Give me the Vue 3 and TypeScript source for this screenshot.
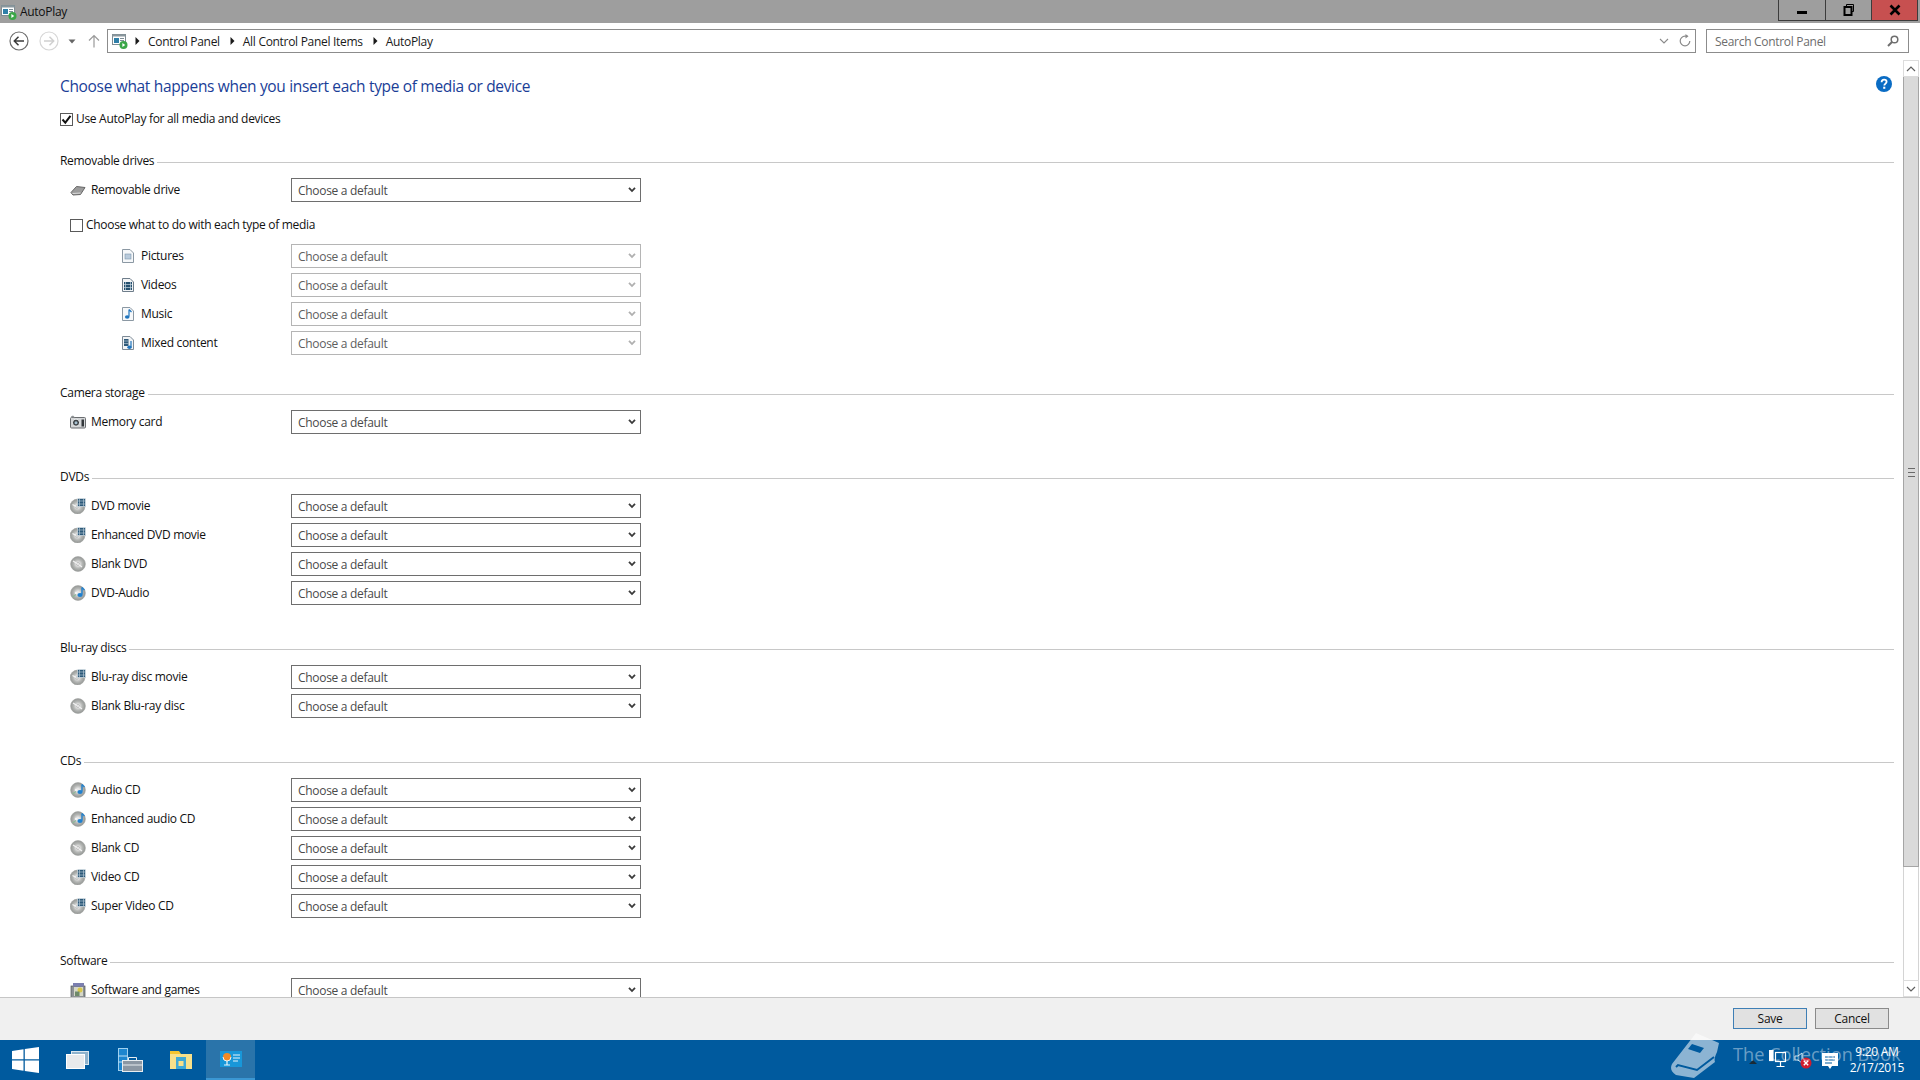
<script setup lang="ts">
interface Row { label: string; icon: string }
interface Section { title: string; rows: Row[] }

const media: Row[] = [
  { label: 'Pictures', icon: 'doc-pic' },
  { label: 'Videos', icon: 'doc-vid' },
  { label: 'Music', icon: 'doc-music' },
  { label: 'Mixed content', icon: 'doc-mixed' },
]

const sections: Section[] = [
  { title: 'Camera storage', rows: [{ label: 'Memory card', icon: 'camera' }] },
  {
    title: 'DVDs',
    rows: [
      { label: 'DVD movie', icon: 'disc-video' },
      { label: 'Enhanced DVD movie', icon: 'disc-video' },
      { label: 'Blank DVD', icon: 'disc' },
      { label: 'DVD-Audio', icon: 'disc-music' },
    ],
  },
  {
    title: 'Blu-ray discs',
    rows: [
      { label: 'Blu-ray disc movie', icon: 'disc-video' },
      { label: 'Blank Blu-ray disc', icon: 'disc' },
    ],
  },
  {
    title: 'CDs',
    rows: [
      { label: 'Audio CD', icon: 'disc-music' },
      { label: 'Enhanced audio CD', icon: 'disc-music' },
      { label: 'Blank CD', icon: 'disc' },
      { label: 'Video CD', icon: 'disc-video' },
      { label: 'Super Video CD', icon: 'disc-video' },
    ],
  },
  { title: 'Software', rows: [{ label: 'Software and games', icon: 'software' }] },
]
</script>

<template>
  <div class="screen">
    <svg class="defs" width="0" height="0" aria-hidden="true">
      <defs>
        <radialGradient id="discFill" cx="50%" cy="50%" r="50%">
          <stop offset="0.2" stop-color="#e8e8e8" />
          <stop offset="0.6" stop-color="#b4b6b4" />
          <stop offset="1" stop-color="#949795" />
        </radialGradient>
      </defs>
      <symbol id="app-ic" viewBox="0 0 16 16">
        <rect x="0.5" y="1.5" width="13" height="10" fill="#fff" stroke="#7f8c93" />
        <rect x="0.5" y="1.5" width="13" height="2" fill="#8a979e" />
        <rect x="2" y="5" width="5" height="5" fill="#2f7fa8" />
        <rect x="8" y="5" width="4" height="1" fill="#7d8d96" />
        <rect x="8" y="7" width="4" height="1" fill="#7d8d96" />
        <circle cx="11.5" cy="12" r="4" fill="#3aa648" />
        <path d="M10.4 10.1 13.2 12 10.4 13.9Z" fill="#fff" />
      </symbol>
      <symbol id="chev" viewBox="0 0 5 8"><path d="M0.5 0 4.5 4 0.5 8Z" fill="#1a1a1a" /></symbol>
      <symbol id="drive" viewBox="0 0 16 16">
        <path d="M1 10.5 6.5 4.5 15 5.5 10.5 12.5 3 13Z" fill="#9c9c9c" stroke="#666" />
        <path d="M2.5 11.5 10.5 11" stroke="#dcdcdc" />
      </symbol>
      <symbol id="doc-pic" viewBox="0 0 16 16">
        <path d="M2.5 1.5H10L13.5 5V14.5H2.5Z" fill="#f6f8fa" stroke="#8b98a3" />
        <rect x="5" y="6" width="6" height="5" fill="#b9cbdc" stroke="#7c96ad" stroke-width=".6" />
      </symbol>
      <symbol id="doc-vid" viewBox="0 0 16 16">
        <path d="M2.5 1.5H10L13.5 5V14.5H2.5Z" fill="#f2f4f6" stroke="#6e7d8a" />
        <rect x="4" y="5" width="8" height="8" fill="#24506f" />
        <path d="M5.5 5V13M10.5 5V13M4 7.5H12M4 10.5H12" stroke="#c5d4df" stroke-width=".7" />
      </symbol>
      <symbol id="doc-music" viewBox="0 0 16 16">
        <path d="M2.5 1.5H10L13.5 5V14.5H2.5Z" fill="#f6f8fa" stroke="#8b98a3" />
        <path d="M9 3.5V10.5M9 3.5 11.5 6" stroke="#1f74bd" stroke-width="1.2" fill="none" />
        <ellipse cx="7.2" cy="11" rx="2.3" ry="1.8" fill="#1f74bd" />
      </symbol>
      <symbol id="doc-mixed" viewBox="0 0 16 16">
        <path d="M2.5 1.5H10L13.5 5V14.5H2.5Z" fill="#f2f4f6" stroke="#7d8a96" />
        <rect x="4" y="4" width="4.5" height="7" fill="#305a79" />
        <path d="M4 6H8.5M4 8.5H8.5" stroke="#c5d4df" stroke-width=".6" />
        <path d="M11 6V12" stroke="#1f74bd" stroke-width="1.2" />
        <ellipse cx="9.5" cy="12.2" rx="2.2" ry="1.7" fill="#1f74bd" />
      </symbol>
      <symbol id="camera" viewBox="0 0 16 16">
        <rect x="0.5" y="3.5" width="15" height="10.5" rx="1" fill="#d4d6d8" stroke="#6a6d70" />
        <path d="M1 2.5 3 1.5 5 3.5H1Z" fill="#8f9396" />
        <circle cx="6" cy="8.7" r="3.6" fill="#3e4347" stroke="#f2f4f5" />
        <circle cx="6" cy="8.7" r="1.5" fill="#a8c1d1" />
        <rect x="11.5" y="5.5" width="2.5" height="7" fill="#33373a" />
      </symbol>
      <symbol id="disc" viewBox="0 0 16 16">
        <circle cx="8" cy="8" r="7.4" fill="url(#discFill)" stroke="#a2a4a2" stroke-width=".6" />
        <circle cx="8" cy="8" r="1.5" fill="#f4f4f4" stroke="#8e8e8e" stroke-width=".5" />
        <path d="M3 5 7 7.5M12 11 9 8.7" stroke="#f3f3f3" stroke-width="1.2" />
      </symbol>
      <symbol id="disc-video" viewBox="0 0 16 16">
        <circle cx="7.5" cy="8.5" r="7.4" fill="url(#discFill)" stroke="#a2a4a2" stroke-width=".6" />
        <circle cx="7" cy="9" r="1.3" fill="#f4f4f4" stroke="#8e8e8e" stroke-width=".5" />
        <path d="M2.5 6.5 6 8.4" stroke="#f3f3f3" stroke-width="1.2" />
        <rect x="7.5" y="0.5" width="8" height="8" fill="#2d5a7a" stroke="#e9eef2" stroke-width=".6" />
        <path d="M9.5 1V8M13.5 1V8M8 3H15M8 6H15" stroke="#c5d4df" stroke-width=".6" />
      </symbol>
      <symbol id="disc-music" viewBox="0 0 16 16">
        <circle cx="8" cy="8" r="7.4" fill="url(#discFill)" stroke="#a2a4a2" stroke-width=".6" />
        <circle cx="6" cy="8" r="1.2" fill="#f4f4f4" />
        <path d="M2.5 12 6 9.6" stroke="#8fb89a" stroke-width="1.2" />
        <path d="M12 2.5V9.5" stroke="#1f80cf" stroke-width="1.4" />
        <path d="M12 2.5 14.5 5" stroke="#1f80cf" stroke-width="1.1" />
        <ellipse cx="10" cy="10" rx="2.6" ry="2" fill="#1f80cf" />
      </symbol>
      <symbol id="software" viewBox="0 0 16 16">
        <rect x="1" y="4" width="14" height="11.5" fill="#8d9295" stroke="#4f5356" stroke-width=".7" />
        <rect x="3" y="1" width="11" height="3.5" fill="#7b7fb0" />
        <rect x="4" y="5" width="9" height="9" fill="#d5d7c8" />
        <circle cx="10" cy="8" r="2.5" fill="#d9c84a" />
        <rect x="5" y="9.5" width="4.5" height="4.5" fill="#6f8a6a" />
      </symbol>
      <symbol id="combo-chev" viewBox="0 0 10 8">
        <path d="M2 1.8 5 5 8 1.8" fill="none" stroke="currentColor" stroke-width="1.8" />
      </symbol>
    </svg>

    <header class="titlebar">
      <svg class="title-icon"><use href="#app-ic" /></svg>
      <span class="title-text">AutoPlay</span>
      <div class="winbtns">
        <div class="winbtn">
          <svg width="12" height="12" viewBox="0 0 12 12"><rect x="1" y="7" width="10" height="3" fill="#000" /></svg>
        </div>
        <div class="winbtn">
          <svg width="12" height="12" viewBox="0 0 12 12" fill="none" stroke="#000">
            <path d="M3.5 2.5V0.5H10.5V7.5H9" />
            <rect x="1.5" y="3" width="7" height="8" stroke-width="2" />
          </svg>
        </div>
        <div class="winbtn close">
          <svg width="12" height="12" viewBox="0 0 12 12"><path d="M1.5 1.5 10.5 10.5M10.5 1.5 1.5 10.5" stroke="#000" stroke-width="2.6" /></svg>
        </div>
      </div>
    </header>

    <nav class="navbar">
      <div class="navbtns">
        <svg class="nav-round" viewBox="0 0 20 20">
          <circle cx="10" cy="10" r="9" fill="#fff" stroke="#6c6c6c" stroke-width="1.2" />
          <path d="M15 10H5.5M9.5 5.8 5.3 10 9.5 14.2" fill="none" stroke="#3a3a3a" stroke-width="1.5" />
        </svg>
        <svg class="nav-round" viewBox="0 0 20 20">
          <circle cx="10" cy="10" r="9" fill="#fff" stroke="#d6d6d6" stroke-width="1.2" />
          <path d="M5 10H14.5M10.5 5.8 14.7 10 10.5 14.2" fill="none" stroke="#d0d0d0" stroke-width="1.5" />
        </svg>
        <svg class="nav-drop" viewBox="0 0 8 5"><path d="M0.5 0.5H7.5L4 4.5Z" fill="#666" /></svg>
        <svg class="nav-up" viewBox="0 0 12 14"><path d="M6 13.5V1.5M1 6.5 6 1.5 11 6.5" fill="none" stroke="#9a9a9a" stroke-width="1.2" /></svg>
      </div>
      <div class="address">
        <svg class="addr-icon"><use href="#app-ic" /></svg>
        <svg class="crumb-chev"><use href="#chev" /></svg>
        <span class="crumb">Control Panel</span>
        <svg class="crumb-chev"><use href="#chev" /></svg>
        <span class="crumb">All Control Panel Items</span>
        <svg class="crumb-chev"><use href="#chev" /></svg>
        <span class="crumb">AutoPlay</span>
        <span class="spacer"></span>
        <svg class="addr-drop" viewBox="0 0 10 6"><path d="M1 1 5 5 9 1" fill="none" stroke="#8a8a8a" stroke-width="1.1" /></svg>
        <svg class="addr-refresh" viewBox="0 0 14 14">
          <path d="M11.8 7A4.8 4.8 0 1 1 7 2.2H9.5" fill="none" stroke="#8a8a8a" stroke-width="1.2" />
          <path d="M7.5 0 10.5 2.2 7.5 4.4Z" fill="#8a8a8a" />
        </svg>
      </div>
      <div class="search">
        <span class="search-text">Search Control Panel</span>
        <svg class="search-icon" viewBox="0 0 12 12">
          <circle cx="7.5" cy="4.5" r="3.3" fill="none" stroke="#6e6e6e" stroke-width="1.5" />
          <path d="M5 7 1 11" stroke="#6e6e6e" stroke-width="2" />
        </svg>
      </div>
    </nav>

    <main class="pane">
      <div class="content">
        <div class="heading-row">
          <h1 class="heading">Choose what happens when you insert each type of media or device</h1>
          <svg class="help" viewBox="0 0 16 16">
            <circle cx="8" cy="8" r="8" fill="#0a6cc4" />
            <path d="M5.6 6.2C5.6 4.6 6.7 3.6 8.1 3.6 9.6 3.6 10.6 4.5 10.6 5.8 10.6 7.6 8.3 7.6 8.3 9.6" fill="none" stroke="#fff" stroke-width="1.8" />
            <rect x="7.2" y="10.7" width="2.1" height="2.1" fill="#fff" />
          </svg>
        </div>

        <label class="check-row top">
          <span class="box">
            <svg viewBox="0 0 11 11"><path d="M1.5 5.5 4.3 8.6 9.5 1.8" fill="none" stroke="#111" stroke-width="2" /></svg>
          </span>
          <span class="check-text">Use AutoPlay for all media and devices</span>
        </label>

        <section class="section media">
          <div class="legend"><span class="legend-text">Removable drives</span><span class="legend-line"></span></div>
          <div class="row">
            <svg class="row-icon"><use href="#drive" /></svg>
            <span class="row-label">Removable drive</span>
            <div class="combo">
              <span class="combo-text">Choose a default</span>
              <svg class="combo-chev"><use href="#combo-chev" /></svg>
            </div>
          </div>
          <label class="check-row sub">
            <span class="box"></span>
            <span class="check-text">Choose what to do with each type of media</span>
          </label>
          <div class="rows indented">
            <div v-for="m in media" :key="m.label" class="row">
              <svg class="row-icon"><use :href="'#' + m.icon" /></svg>
              <span class="row-label">{{ m.label }}</span>
              <div class="combo off">
                <span class="combo-text">Choose a default</span>
                <svg class="combo-chev"><use href="#combo-chev" /></svg>
              </div>
            </div>
          </div>
        </section>

        <section v-for="s in sections" :key="s.title" class="section">
          <div class="legend"><span class="legend-text">{{ s.title }}</span><span class="legend-line"></span></div>
          <div class="rows">
            <div v-for="r in s.rows" :key="r.label" class="row">
              <svg class="row-icon"><use :href="'#' + r.icon" /></svg>
              <span class="row-label">{{ r.label }}</span>
              <div class="combo">
                <span class="combo-text">Choose a default</span>
                <svg class="combo-chev"><use href="#combo-chev" /></svg>
              </div>
            </div>
          </div>
        </section>
      </div>

      <aside class="scrollbar">
        <div class="sb-btn">
          <svg viewBox="0 0 10 6"><path d="M1 5 5 1 9 5" fill="none" stroke="#5f5f5f" stroke-width="1.2" /></svg>
        </div>
        <div class="sb-track">
          <div class="sb-thumb"><span class="grip"></span></div>
        </div>
        <div class="sb-btn">
          <svg viewBox="0 0 10 6"><path d="M1 1 5 5 9 1" fill="none" stroke="#5f5f5f" stroke-width="1.2" /></svg>
        </div>
      </aside>
    </main>

    <footer class="footer">
      <button class="btn primary">Save</button>
      <button class="btn">Cancel</button>
    </footer>

    <div class="taskbar">
      <div class="task-items">
        <div class="task start">
          <svg width="27" height="26" viewBox="0 0 27 26">
            <path d="M0 4 11.5 2.3V12.3H0ZM12.8 2.1 27 0V12.3H12.8ZM0 13.6H11.5V23.7L0 22ZM12.8 13.6H27V26L12.8 23.9Z" fill="#fff" />
          </svg>
        </div>
        <div class="task view">
          <svg width="23" height="18" viewBox="0 0 23 18">
            <rect x="5.5" y="0.5" width="17" height="13" fill="#8fb3cd" stroke="#dbe7ef" />
            <rect x="0.5" y="3.5" width="18" height="14" fill="#e8eaec" stroke="#fff" />
          </svg>
        </div>
        <div class="task server">
          <svg width="25" height="24" viewBox="0 0 25 24">
            <rect x="0.5" y="0.5" width="9" height="22" fill="#1d86cf" stroke="#9fd0ef" />
            <path d="M0.5 8H9.5M0.5 14H9.5" stroke="#bfe0f5" />
            <rect x="4.5" y="12.5" width="20" height="11" fill="#8b97a3" stroke="#e8edf0" />
            <path d="M10.5 12.5V9.5H18.5V12.5" fill="none" stroke="#e8edf0" />
            <path d="M4.5 17H24.5" stroke="#e8edf0" />
          </svg>
        </div>
        <div class="task">
          <svg width="23" height="20" viewBox="0 0 23 20">
            <path d="M0 1H9L11 4H22V19H0Z" fill="#f4c430" />
            <rect x="0" y="4" width="22" height="15" fill="#f8e08a" />
            <rect x="6" y="7" width="10" height="12" fill="#3fa9d6" />
            <rect x="8.5" y="11" width="5" height="5" fill="#f8e08a" />
          </svg>
        </div>
        <div class="task active">
          <svg width="22" height="18" viewBox="0 0 22 18">
            <rect x="0" y="1" width="22" height="16" fill="#1897d9" />
            <circle cx="7" cy="7" r="4" fill="#f08a24" />
            <path d="M7 11V15M4 15H10" stroke="#e6f4fb" stroke-width="1.2" />
            <path d="M13 5H20M13 8H20M13 11H18" stroke="#e6f4fb" stroke-width="1.2" />
            <path d="M3 7A4 4 0 0 0 11 7" fill="none" stroke="#e6f4fb" />
          </svg>
        </div>
      </div>
      <div class="tray">
        <svg class="tray-up" viewBox="0 0 12 6"><path d="M0 6 6 0 12 6Z" fill="#1a2a36" /></svg>
        <svg class="tray-net" viewBox="0 0 18 20" fill="none" stroke="#fff" stroke-width="1.2">
          <rect x="6.5" y="2.5" width="10" height="9" />
          <path d="M11.5 12V16M7.5 16.5H15.5" />
          <rect x="0.5" y="0.5" width="3.5" height="10" fill="#fff" />
        </svg>
        <span class="tray-sound">
          <svg width="18" height="18" viewBox="0 0 18 18">
            <path d="M1 5H4L8 2V12L4 9H1Z" fill="none" stroke="#cfe1ee" />
            <circle cx="12" cy="12" r="5.5" fill="#d01c2e" />
            <path d="M9.8 9.8 14.2 14.2M14.2 9.8 9.8 14.2" stroke="#fff" stroke-width="1.4" />
          </svg>
        </span>
        <svg class="tray-note" viewBox="0 0 16 18">
          <path d="M0 0H16V13H10L8 16 6 13H0Z" fill="#fff" />
          <path d="M3 4H13M3 7H13M3 10H10" stroke="#005a9e" />
        </svg>
        <div class="clock"><span>9:20 AM</span><span>2/17/2015</span></div>
      </div>
    </div>

    <div class="watermark">
      <svg class="wm-book" viewBox="0 0 50 46">
        <path d="M2 32 26 1 49 11 47 20C45 24 44 28 45 30L24 46 6 43C1 40 0 36 2 32Z" fill="#fff" />
        <path d="M6 35 8 33 27 38 44 25" fill="none" stroke="#005a9e" stroke-width="2" />
        <path d="M22 12 34 16 30 21 18 17Z" fill="#005a9e" />
      </svg>
      <span class="wm-text">The Collection Book</span>
    </div>
  </div>
</template>

<style scoped>
.defs { position: absolute; }
.screen {
  position: relative;
  width: 1920px;
  height: 1080px;
  display: flex;
  flex-direction: column;
  overflow: hidden;
  background: #fff;
  font-family: "Open Sans", "Noto Sans", sans-serif;
  font-size: 12px;
  letter-spacing: -0.3px;
  color: #111;
}
.titlebar {
  height: 23px;
  flex: none;
  display: flex;
  align-items: center;
  background: #9e9e9e;
  padding-left: 1px;
}
.title-icon { width: 16px; height: 16px; }
.title-text { margin-left: 3px; color: #101010; }
.winbtns { margin-left: auto; margin-right: 2px; align-self: flex-start; display: flex; height: 20px; border: solid #3c3c3c; border-width: 0 1px 1px; }
.winbtn { width: 46px; box-sizing: border-box; display: flex; align-items: center; justify-content: center; border-left: 1px solid #3c3c3c; }
.winbtn:first-child { border-left: 0; }
.winbtn.close { background: #c75050; }
.navbar { height: 37px; flex: none; display: flex; align-items: flex-start; padding-top: 6px; box-sizing: border-box; }
.navbtns { width: 107px; height: 24px; flex: none; display: flex; align-items: center; padding-left: 9px; box-sizing: border-box; }
.nav-round { width: 20px; height: 20px; margin-right: 10px; }
.nav-drop { width: 8px; height: 5px; margin-left: -1px; }
.nav-up { width: 12px; height: 14px; margin-left: 12px; }
.address {
  width: 1589px;
  height: 24px;
  flex: none;
  box-sizing: border-box;
  border: 1px solid #8c8c8c;
  display: flex;
  align-items: center;
  padding-left: 4px;
}
.addr-icon { width: 16px; height: 16px; margin-right: 7px; }
.crumb-chev { width: 5px; height: 8px; margin-right: 8px; }
.crumb { margin-right: 10px; color: #1a1a1a; }
.spacer { flex: 1; }
.addr-drop { width: 10px; height: 6px; margin-right: 9px; }
.addr-refresh { width: 14px; height: 14px; margin-right: 3px; }
.search {
  width: 203px;
  height: 24px;
  flex: none;
  margin-left: 10px;
  box-sizing: border-box;
  border: 1px solid #8c8c8c;
  display: flex;
  align-items: center;
  justify-content: space-between;
  padding: 0 9px 0 8px;
  color: #6d6d6d;
}
.search-icon { width: 12px; height: 12px; }
.pane { flex: 1; min-height: 0; display: flex; }
.content { flex: 1; min-width: 0; overflow: hidden; padding: 14px 9px 0 60px; }
.heading-row { display: flex; align-items: center; justify-content: space-between; height: 24px; padding-right: 2px; }
.heading { margin: 0; font-size: 15.5px; font-weight: 400; letter-spacing: -0.33px; color: #1a3e97; }
.help { width: 16px; height: 16px; margin-top: -4px; }
.check-row { display: flex; align-items: center; height: 20px; }
.check-row.top { margin: 11px 0 23px; gap: 3px; }
.check-row.sub { margin: 13px 0 9px 10px; gap: 3px; }
.check-text { margin-top: -2px; }
.box {
  width: 13px;
  height: 13px;
  box-sizing: border-box;
  border: 1px solid #5a5a5a;
  background: #fff;
  display: flex;
  align-items: center;
  justify-content: center;
}
.box svg { width: 11px; height: 11px; }
.section { margin-bottom: 34px; }
.section.media { margin-bottom: 29px; }
.legend { height: 18px; display: flex; align-items: center; margin-bottom: 8px; }
.legend-text { flex: none; margin-right: 3px; margin-top: -2px; }
.legend-line { flex: 1; height: 1px; background: #c8c8c8; margin-top: 3px; }
.rows { display: flex; flex-direction: column; gap: 5px; }
.rows.indented .row-icon { margin-left: 60px; }
.rows.indented .row-label { width: 150px; margin-left: 5px; }
.row { display: flex; align-items: center; height: 24px; }
.row-icon { width: 16px; height: 16px; margin-left: 10px; flex: none; }
.row-label { width: 200px; margin-left: 5px; margin-top: -2px; flex: none; }
.combo {
  width: 350px;
  height: 24px;
  box-sizing: border-box;
  border: 1px solid #6e6e6e;
  background: #fff;
  display: flex;
  align-items: center;
  justify-content: space-between;
  padding: 0 3px 0 6px;
  color: #4a4a4a;
}
.combo.off { border-color: #b5b5b5; color: #5e5e5e; }
.combo-chev { width: 10px; height: 8px; color: #3a3a3a; }
.combo.off .combo-chev { color: #b0b0b0; }
.scrollbar { width: 16px; flex: none; margin-right: 1px; display: flex; flex-direction: column; }
.sb-btn { height: 17px; flex: none; display: flex; align-items: center; justify-content: center; border: 1px solid #dcdcdc; box-sizing: border-box; background: #fff; }
.sb-btn svg { width: 10px; height: 6px; }
.sb-track { flex: 1; min-height: 0; background: #fff; border: solid #d4d4d4; border-width: 0 1px; }
.sb-thumb {
  height: 790px;
  margin: 0 -1px;
  box-sizing: border-box;
  background: #dadada;
  border: solid #a5a5a5;
  border-width: 0 1px 1px;
  display: flex;
  align-items: flex-start;
  justify-content: center;
  padding-top: 391px;
}
.grip { width: 7px; height: 7px; border-top: 1px solid #6a6a6a; border-bottom: 1px solid #6a6a6a; position: relative; }
.grip::after { content: ""; position: absolute; left: 0; right: 0; top: 3px; height: 1px; background: #6a6a6a; }
.footer {
  height: 43px;
  flex: none;
  box-sizing: border-box;
  border-top: 1px solid #c6c6c6;
  background: #f0f0f0;
  display: flex;
  justify-content: flex-end;
  align-items: flex-start;
  gap: 8px;
  padding: 10px 31px 0 0;
}
.btn {
  width: 74px;
  height: 21px;
  box-sizing: border-box;
  border: 1px solid #8a8a8a;
  background: #e1e1e1;
  font: inherit;
  letter-spacing: inherit;
  color: #111;
  padding: 0;
}
.btn.primary { border-color: #3f7fb5; }
.taskbar { height: 40px; flex: none; background: #005a9e; display: flex; justify-content: space-between; }
.task-items { display: flex; }
.task { width: 50px; display: flex; align-items: center; justify-content: center; box-sizing: border-box; }
.task.view { width: 54px; }
.task.server { width: 52px; }
.task.active { width: 49px; background: #2a74aa; border-bottom: 2px solid #3b97d3; }
.tray { display: flex; align-items: center; position: relative; width: 180px; color: #fff; }
.tray-up { width: 12px; height: 4px; position: absolute; left: 7px; top: 20px; }
.tray-net { width: 18px; height: 20px; position: absolute; left: 29px; top: 10px; }
.tray-sound { position: absolute; left: 54px; top: 11px; display: flex; }
.tray-note { width: 16px; height: 18px; position: absolute; left: 82px; top: 13px; }
.clock { position: absolute; right: 16px; top: 4px; display: flex; flex-direction: column; align-items: center; line-height: 16px; }
.watermark {
  position: absolute;
  left: 1670px;
  top: 1032px;
  display: flex;
  align-items: center;
  gap: 13px;
  pointer-events: none;
}
.wm-book { width: 50px; height: 46px; opacity: 0.55; }
.wm-text { font-size: 18.2px; letter-spacing: 0; color: rgba(255, 255, 255, 0.42); margin-top: -2px; }
</style>
